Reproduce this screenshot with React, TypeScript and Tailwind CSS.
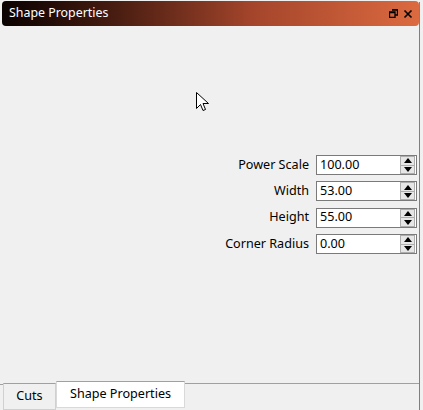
const fields = [
  { label: "Power Scale", value: "100.00" },
  { label: "Width", value: "53.00" },
  { label: "Height", value: "55.00" },
  { label: "Corner Radius", value: "0.00" },
];

function Spinner() {
  return (
    <div className="flex flex-col w-[15px] h-[18px] mr-[1px] border border-[#adadad] bg-[#e6e6e6]">
      <div className="flex-1 flex items-center justify-center border-b border-[#adadad]">
        <svg width="8" height="5" viewBox="0 0 8 5">
          <path d="M4 0 L8 5 L0 5 Z" fill="#000" />
        </svg>
      </div>
      <div className="flex-1 flex items-center justify-center">
        <svg width="8" height="5" viewBox="0 0 8 5">
          <path d="M0 0 L8 0 L4 5 Z" fill="#000" />
        </svg>
      </div>
    </div>
  );
}

function Cursor() {
  return (
    <svg width="13" height="20" viewBox="0 0 13 20" className="absolute left-[196px] top-[92px]">
      <path
        d="M0.5 0.5 L0.5 16.5 L4.5 12.5 L7 18.5 L9.5 17.5 L7 11.5 L12.5 11.5 Z"
        fill="#fff"
        stroke="#000"
        strokeWidth="1"
      />
    </svg>
  );
}

export default function App() {
  return (
    <div
      className="relative w-[423px] h-[410px] bg-[#f0f0f0] flex text-[12.6px] text-black"
      style={{ fontFamily: '"Noto Sans", "Open Sans", sans-serif' }}
    >
      <div className="w-[419px] flex flex-col">
        <div className="mt-[1px] ml-[2px] h-[25px] rounded-[4px] bg-gradient-to-r from-[#0a0302] via-[#a4452b] via-60% to-[#dc6a40] flex items-center justify-between pl-[7px] pr-[6px]">
          <span className="text-white text-[12.4px] leading-none">Shape Properties</span>
          <div className="flex items-center gap-[5px]">
            <svg width="9" height="9" viewBox="0 0 9 9">
              <path d="M3 0.5 H8.5 V6 H6.5 M0.5 3 H6 V8.5 H0.5 Z M0.5 3.5 H6 M3 1 H8.5" fill="none" stroke="#000" strokeWidth="1.3" />
            </svg>
            <svg width="10" height="10" viewBox="0 0 10 10">
              <path d="M1.5 1.5 L8.5 8.5 M8.5 1.5 L1.5 8.5" stroke="#000" strokeWidth="1.6" />
            </svg>
          </div>
        </div>

        <div className="flex-1 flex justify-end pt-[129px] pr-[2px]">
          <div className="grid grid-cols-[auto_101px] gap-x-[7px] gap-y-[6.4px] h-fit">
            {fields.map((f) => (
              <div key={f.label} className="contents">
                <div className="h-[20px] flex items-center justify-end">{f.label}</div>
                <div className="h-[20px] bg-white border border-[#7a7a7a] flex items-center justify-between pl-[3px]">
                  <span>{f.value}</span>
                  <Spinner />
                </div>
              </div>
            ))}
          </div>
        </div>

        <div className="h-[29px] flex items-start">
          <div className="w-[3px] h-[2px] mt-[2px] border-b border-[#a0a0a0]" />
          <div className="w-[53px] h-[27px] mt-[2px] border border-[#d0d0d0] border-t-[#a0a0a0] bg-[#f0f0f0] flex items-center justify-center">
            Cuts
          </div>
          <div className="w-[129px] h-[27px] bg-white border border-[#d9d9d9] border-t-[#a0a0a0] flex items-center justify-center">
            Shape Properties
          </div>
          <div className="flex-1 h-[3px] border-b border-[#a0a0a0]" />
        </div>
      </div>
      <div className="w-px mt-[2px] bg-[#c26262]" />
      <Cursor />
    </div>
  );
}
